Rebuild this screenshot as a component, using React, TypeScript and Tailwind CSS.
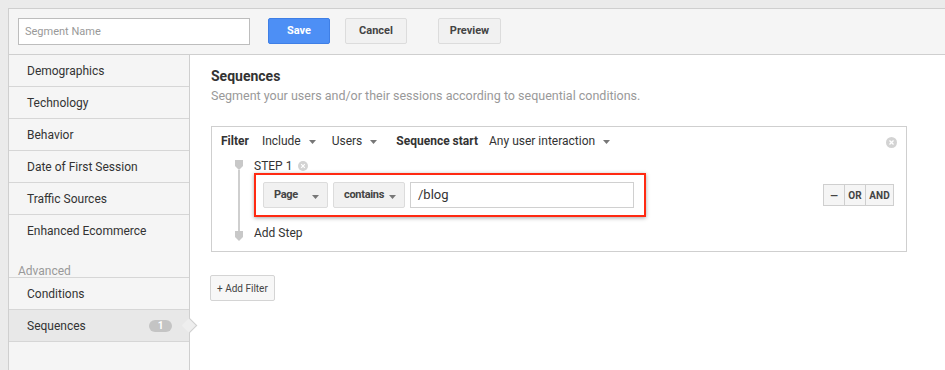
import React from "react";

const sideItems = [
    "Demographics",
    "Technology",
    "Behavior",
    "Date of First Session",
    "Traffic Sources",
];

function Caret() {
    return (
        <svg width="7" height="4" viewBox="0 0 7 4" className="ml-2 mt-[1px]">
            <path d="M0 0h7L3.5 4z" fill="#777" />
        </svg>
    );
}

function ClearIcon({ size = 11 }: { size?: number }) {
    return (
        <svg width={size} height={size} viewBox="0 0 12 12">
            <circle cx="6" cy="6" r="6" fill="#d3d3d3" />
            <path d="M3.8 3.8l4.4 4.4M8.2 3.8l-4.4 4.4" stroke="#fff" strokeWidth="1.4" />
        </svg>
    );
}

function StepMarker() {
    return (
        <svg width="8" height="10" viewBox="0 0 8 10">
            <path d="M0 0h8v6L4 10L0 6z" fill="#c8c8c8" />
        </svg>
    );
}

function Dropdown({ label, width }: { label: string; width: string }) {
    return (
        <div className={`flex items-center h-[26px] ${width} bg-[#f1f1f1] border border-[#dcdcdc] rounded-[2px] pl-[10px] pr-[8px] text-[11px] font-bold tracking-[-0.3px] text-[#444]`}>
            <span>{label}</span>
            <svg width="7" height="4" viewBox="0 0 7 4" className="ml-auto mt-[3px] shrink-0">
                <path d="M0 0h7L3.5 4z" fill="#777" />
            </svg>
        </div>
    );
}

export default function App() {
    return (
        <div className="w-[945px] h-[370px] overflow-hidden bg-[#ebebeb] pt-2 pl-2 font-['Roboto',sans-serif] text-[#333]">
            <div className="h-full w-[960px] bg-white border-l border-t border-[#cfcfcf] flex flex-col">
                {/* toolbar */}
                <div className="h-[46px] shrink-0 bg-[#f5f5f5] border-b border-[#cfcfcf] flex items-start pt-[9px] pl-[9px]">
                    <input
                        className="w-[232px] h-[27px] bg-white border border-[#bdbdbd] px-[6px] text-[11px] outline-none placeholder:text-[#999]"
                        placeholder="Segment Name"
                    />
                    <button className="ml-[18px] w-[62px] h-[26px] bg-[#4d8ff5] border border-[#3f7fe6] rounded-[2px] text-white text-[11px] font-bold">
                        Save
                    </button>
                    <button className="ml-[15px] w-[62px] h-[26px] bg-[#f1f1f1] border border-[#dcdcdc] rounded-[2px] text-[#444] text-[11px] font-bold">
                        Cancel
                    </button>
                    <button className="ml-[31px] w-[63px] h-[26px] bg-[#f1f1f1] border border-[#dcdcdc] rounded-[2px] text-[#444] text-[11px] font-bold">
                        Preview
                    </button>
                </div>

                <div className="flex flex-1 min-h-0">
                    {/* sidebar */}
                    <div className="w-[181px] shrink-0 bg-[#f5f5f5] border-r border-[#cfcfcf] text-[12px]">
                        {sideItems.map(item => (
                            <div key={item} className="h-[32px] flex items-center pl-[18px] border-b border-[#d6d6d6]">
                                {item}
                            </div>
                        ))}
                        <div className="h-[32px] flex items-center pl-[18px]">Enhanced Ecommerce</div>
                        <div className="h-[31px] flex items-end pl-[9px] leading-[12px] text-[#999] border-b border-[#d6d6d6]">
                            Advanced
                        </div>
                        <div className="h-[32px] flex items-center pl-[18px] border-b border-[#d6d6d6]">Conditions</div>
                        <div className="relative h-[32px] flex items-center pl-[18px] pr-[17px] bg-[#e8e8e8] border-b border-[#d6d6d6]">
                            <span>Sequences</span>
                            <span className="ml-auto w-[23px] h-[12px] rounded-full bg-[#c4c4c4] text-white text-[10px] font-bold flex items-center justify-center">
                                1
                            </span>
                            <div className="absolute right-[-6px] top-[10px] w-[11px] h-[11px] rotate-45 bg-[#eeeeee] border-t border-r border-[#cfcfcf]" />
                        </div>
                    </div>

                    {/* main */}
                    <div className="flex-1 pl-[21px] pt-[13px]">
                        <h2 className="text-[14px] leading-[16px] font-bold text-[#333]">Sequences</h2>
                        <p className="mt-[4px] text-[12.5px] leading-[16px] text-[#999]">
                            Segment your users and/or their sessions according to sequential conditions.
                        </p>

                        <div className="mt-[22px] w-[696px] h-[126px] border border-[#cfcfcf] flex flex-col">
                            <div className="h-[20px] mt-[4px] flex items-center pl-[9px] pr-[9px] text-[12px]">
                                <span className="font-bold">Filter</span>
                                <span className="ml-[13px] flex items-center">Include<Caret /></span>
                                <span className="ml-[16px] flex items-center">Users<Caret /></span>
                                <span className="ml-[19px] font-bold">Sequence start</span>
                                <span className="ml-[11px] flex items-center">Any user interaction<Caret /></span>
                                <span className="ml-auto mt-[2px]"><ClearIcon /></span>
                            </div>

                            <div className="flex mt-[6px] pl-[23px] pr-[12px]">
                                <div className="w-[8px] flex flex-col items-center pt-[3px]">
                                    <StepMarker />
                                    <div className="w-[2px] flex-1 bg-[#cfcfcf]" />
                                    <StepMarker />
                                </div>
                                <div className="flex-1 ml-[11px] flex flex-col">
                                    <div className="h-[16px] pt-[2px] flex items-center text-[12px]">
                                        STEP 1
                                        <span className="ml-[6px]"><ClearIcon size={10} /></span>
                                    </div>
                                    <div className="flex items-center">
                                        <div className="w-[392px] h-[44px] border-2 border-[#ff2a12] shadow-[0_1px_4px_rgba(0,0,0,0.35)] flex items-center pl-[7px] gap-[5px]">
                                            <Dropdown label="Page" width="w-[65px]" />
                                            <Dropdown label="contains" width="w-[72px]" />
                                            <div className="w-[224px] h-[26px] bg-white border border-[#d0d0d0] flex items-center pl-[7px] text-[13px] text-[#333]">
                                                /blog
                                            </div>
                                        </div>
                                        <div className="ml-auto flex h-[22px] border border-[#cfcfcf] bg-[#f5f5f5] text-[10px] font-bold text-[#444]">
                                            <span className="w-[21px] flex items-center justify-center border-r border-[#cfcfcf]">—</span>
                                            <span className="w-[21px] flex items-center justify-center border-r border-[#cfcfcf]">OR</span>
                                            <span className="w-[27px] flex items-center justify-center">AND</span>
                                        </div>
                                    </div>
                                    <div className="h-[16px] mt-[8px] flex items-center text-[12px]">Add Step</div>
                                </div>
                            </div>
                        </div>

                        <button className="mt-[23px] -ml-[1px] h-[26px] px-[6px] bg-[#f7f7f7] border border-[#d4d4d4] rounded-[2px] text-[10px] text-[#444]">
                            + Add Filter
                        </button>
                    </div>
                </div>
            </div>
        </div>
    );
}
